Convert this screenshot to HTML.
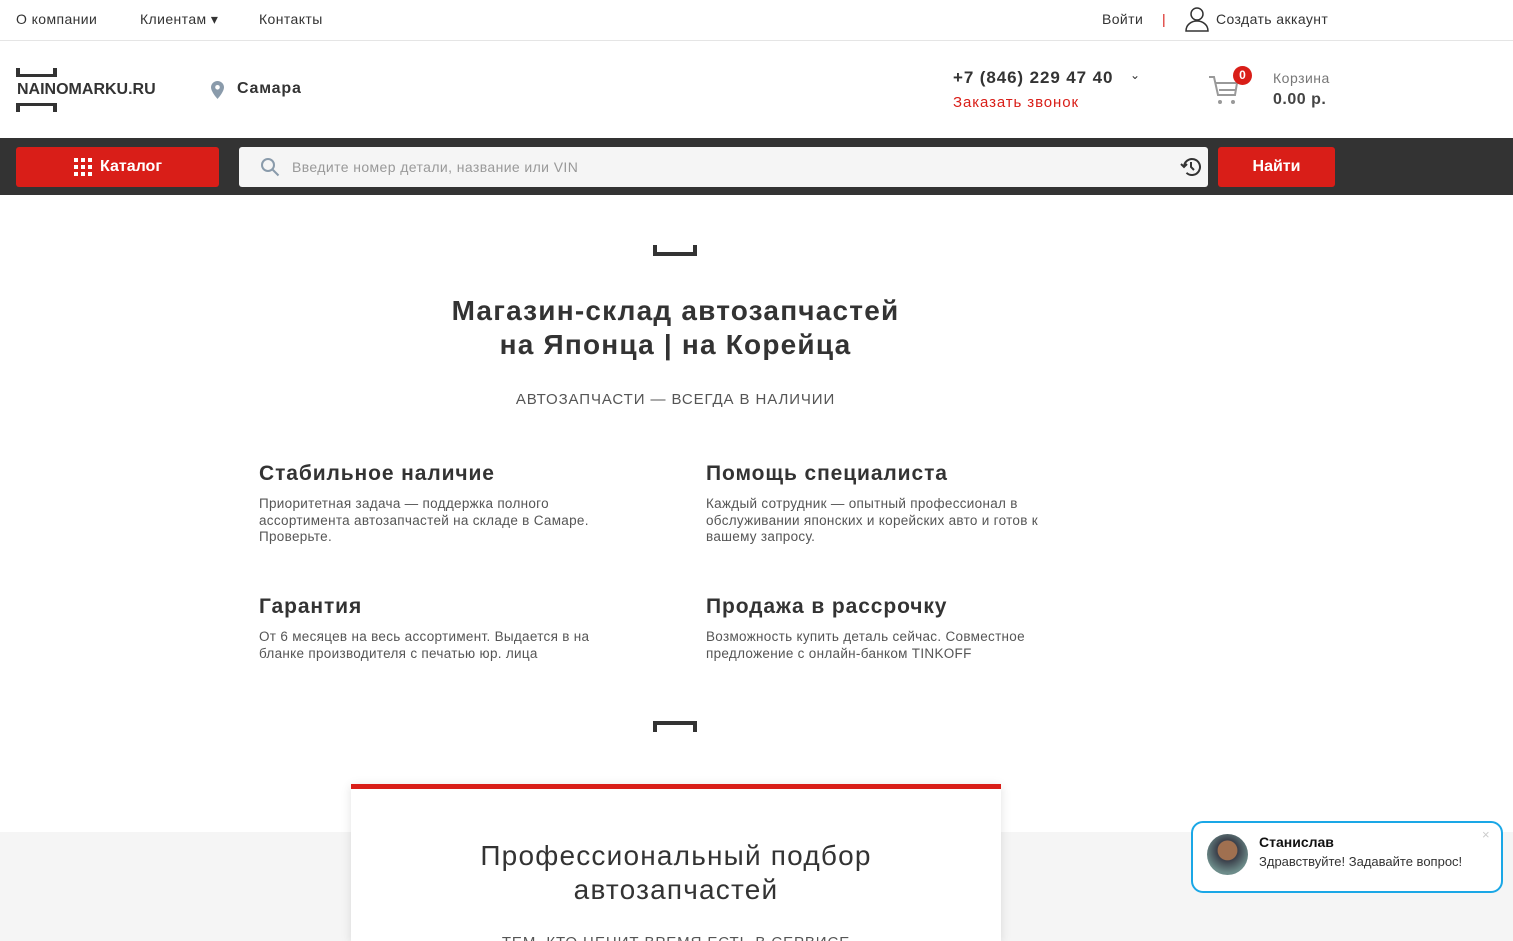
<!DOCTYPE html>
<html style="overflow:hidden"><head><meta charset="utf-8">
<style>
*{margin:0;padding:0;box-sizing:border-box}
html,body{width:1513px;height:941px;overflow:hidden}
body{font-family:"Liberation Sans",sans-serif;color:#333;background:#fff;position:relative}
.a{position:absolute;white-space:nowrap}
.top{position:absolute;left:0;top:0;width:1513px;height:41px;border-bottom:1px solid #e5e5e5;font-size:14px;color:#333;letter-spacing:.4px}
.bar{position:absolute;left:0;top:138px;width:1513px;height:57px;background:#333}
.red{background:#d91e18;color:#fff;border-radius:3px;font-weight:bold;font-size:16px}
.ft{font-size:21px;font-weight:bold;color:#333;letter-spacing:.9px}
.fp{font-size:13.5px;line-height:16.5px;color:#555;white-space:normal;width:368px;letter-spacing:.3px}
</style></head><body>
<div class="top">
<span class="a" style="left:16px;top:11px">О компании</span>
<span class="a" style="left:140px;top:11px">Клиентам ▾</span>
<span class="a" style="left:259px;top:11px">Контакты</span>
<span class="a" style="left:1102px;top:11px">Войти</span>
<span class="a" style="left:1162px;top:11px;color:#d91e18">|</span>
<svg class="a" style="left:1184px;top:6px" width="26" height="26" viewBox="0 0 26 26" fill="none" stroke="#333" stroke-width="1.5"><circle cx="13" cy="8" r="6"/><path d="M2 25c0-6 5-10 11-10s11 4 11 10z"/></svg>
<span class="a" style="left:1216px;top:11px">Создать аккаунт</span>
</div>
<svg class="a" style="left:16px;top:68px" width="42" height="44"><rect x="0" y="0" width="4" height="9" fill="#333"/><rect x="37" y="0" width="4" height="9" fill="#333"/><rect x="0" y="6" width="41" height="3" fill="#333"/><rect x="0" y="35" width="41" height="3" fill="#333"/><rect x="0" y="35" width="4" height="9" fill="#333"/><rect x="37" y="35" width="4" height="9" fill="#333"/></svg>
<span class="a" style="left:17px;top:81px;font-size:16px;font-weight:bold;color:#333">NAINOMARKU.RU</span>
<svg class="a" style="left:211px;top:81px" width="13" height="18" viewBox="0 0 13 18"><path d="M6.5 0C3 0 0 2.8 0 6.3 0 11 6.5 18 6.5 18S13 11 13 6.3C13 2.8 10 0 6.5 0z" fill="#8a9bab"/><circle cx="6.5" cy="6.3" r="2.3" fill="#fff"/></svg>
<span class="a" style="left:237px;top:80px;font-size:16px;font-weight:bold;color:#333;letter-spacing:.8px">Самара</span>
<span class="a" style="left:953px;top:68px;font-size:17px;font-weight:bold;color:#333;letter-spacing:.9px">+7 (846) 229 47 40</span>
<span class="a" style="left:1130px;top:68px;font-size:12px">⌄</span>
<span class="a" style="left:953px;top:94px;font-size:15px;color:#d91e18;letter-spacing:.9px">Заказать звонок</span>
<svg class="a" style="left:1208px;top:74px" width="32" height="32" viewBox="0 0 32 32" fill="none" stroke="#999" stroke-width="2"><path d="M1 3h5l4 18h17l2-12H8"/><path d="M11 16h16"/><circle cx="12" cy="28" r="2" fill="#999" stroke="none"/><circle cx="25" cy="28" r="2" fill="#999" stroke="none"/></svg>
<div class="a" style="left:1233px;top:66px;width:19px;height:19px;border-radius:50%;background:#d91e18;color:#fff;font-size:12px;font-weight:bold;text-align:center;line-height:19px">0</div>
<span class="a" style="left:1273px;top:70px;font-size:14px;color:#777;letter-spacing:.5px">Корзина</span>
<span class="a" style="left:1273px;top:91px;font-size:16px;font-weight:bold;color:#444;letter-spacing:.5px">0.00 р.</span>
<div class="bar"></div>
<div class="a red" style="left:16px;top:147px;width:203px;height:40px"></div>
<svg class="a" style="left:74px;top:158px" width="18" height="18"><g fill="#fff"><rect x="0" y="0" width="4" height="4"/><rect x="7" y="0" width="4" height="4"/><rect x="14" y="0" width="4" height="4"/><rect x="0" y="7" width="4" height="4"/><rect x="7" y="7" width="4" height="4"/><rect x="14" y="7" width="4" height="4"/><rect x="0" y="14" width="4" height="4"/><rect x="7" y="14" width="4" height="4"/><rect x="14" y="14" width="4" height="4"/></g></svg>
<span class="a" style="left:100px;top:158px;font-size:16px;font-weight:bold;color:#fff">Каталог</span>
<div class="a" style="left:239px;top:147px;width:969px;height:40px;background:#f5f5f5;border-radius:3px"></div>
<svg class="a" style="left:260px;top:157px" width="20" height="20" fill="none" stroke="#8a9bab" stroke-width="2"><circle cx="8" cy="8" r="6"/><path d="M12.5 12.5l6 6"/></svg>
<span class="a" style="left:292px;top:159px;font-size:14px;color:#999;letter-spacing:.4px">Введите номер детали, название или VIN</span>
<svg class="a" style="left:1180px;top:156px" width="22" height="22" viewBox="0 0 22 22" fill="none" stroke="#333" stroke-width="2"><path d="M4 11a8 8 0 1 1 2.5 5.8"/><path d="M1 8l3 3 3-3"/><path d="M11 6v5l3 3"/></svg>
<div class="a red" style="left:1218px;top:147px;width:117px;height:40px;text-align:center;line-height:40px">Найти</div>

<svg class="a" style="left:653px;top:245px" width="44" height="11"><rect x="0" y="0" width="4" height="11" fill="#333"/><rect x="40" y="0" width="4" height="11" fill="#333"/><rect x="0" y="7" width="44" height="4" fill="#333"/></svg>
<div class="a" style="left:0;width:1351px;top:294px;text-align:center;font-size:28px;font-weight:bold;line-height:34px;color:#333;letter-spacing:1.2px">Магазин-склад автозапчастей<br>на Японца | на Корейца</div>
<div class="a" style="left:0;width:1351px;top:391px;text-align:center;font-size:15px;color:#555;letter-spacing:.9px">АВТОЗАПЧАСТИ — ВСЕГДА В НАЛИЧИИ</div>

<span class="a ft" style="left:259px;top:462px">Стабильное наличие</span>
<div class="a fp" style="left:259px;top:496px">Приоритетная задача — поддержка полного ассортимента автозапчастей на складе в Самаре. Проверьте.</div>
<span class="a ft" style="left:706px;top:462px">Помощь специалиста</span>
<div class="a fp" style="left:706px;top:496px;width:385px">Каждый сотрудник — опытный профессионал в обслуживании японских и корейских авто и готов к вашему запросу.</div>
<span class="a ft" style="left:259px;top:595px">Гарантия</span>
<div class="a fp" style="left:259px;top:629px">От 6 месяцев на весь ассортимент. Выдается в на бланке производителя с печатью юр. лица</div>
<span class="a ft" style="left:706px;top:595px">Продажа в рассрочку</span>
<div class="a fp" style="left:706px;top:629px;width:360px">Возможность купить деталь сейчас. Совместное предложение с онлайн-банком TINKOFF</div>

<svg class="a" style="left:653px;top:721px" width="44" height="11"><rect x="0" y="0" width="4" height="11" fill="#333"/><rect x="40" y="0" width="4" height="11" fill="#333"/><rect x="0" y="0" width="44" height="4" fill="#333"/></svg>

<div class="a" style="left:0;top:832px;width:1513px;height:109px;background:#f5f5f5"></div>
<div class="a" style="left:351px;top:784px;width:650px;height:157px;background:#fff;border-top:5px solid #d91e18;box-shadow:0 2px 10px rgba(0,0,0,.12)"></div>
<div class="a" style="left:351px;width:650px;top:839px;text-align:center;font-size:28px;line-height:34px;color:#333;letter-spacing:1.2px">Профессиональный подбор<br>автозапчастей</div>
<div class="a" style="left:351px;width:650px;top:934px;text-align:center;font-size:15px;color:#555;letter-spacing:.9px">ТЕМ, КТО ЦЕНИТ ВРЕМЯ ЕСТЬ В СЕРВИСЕ</div>

<div class="a" style="left:1191px;top:821px;width:312px;height:72px;background:#fff;border:2px solid #1aa7e6;border-radius:12px"></div>
<div class="a" style="left:1207px;top:834px;width:41px;height:41px;border-radius:50%;background:radial-gradient(circle at 50% 40%,#a07050 0 30%,#3a3f4a 32%,#6d8c8a 70%)"></div>
<span class="a" style="left:1259px;top:834px;font-size:14px;font-weight:bold;color:#111">Станислав</span>
<span class="a" style="left:1259px;top:854px;font-size:13px;color:#333">Здравствуйте! Задавайте вопрос!</span>
<span class="a" style="left:1482px;top:827px;font-size:13px;color:#ccc">×</span>
</body></html>
